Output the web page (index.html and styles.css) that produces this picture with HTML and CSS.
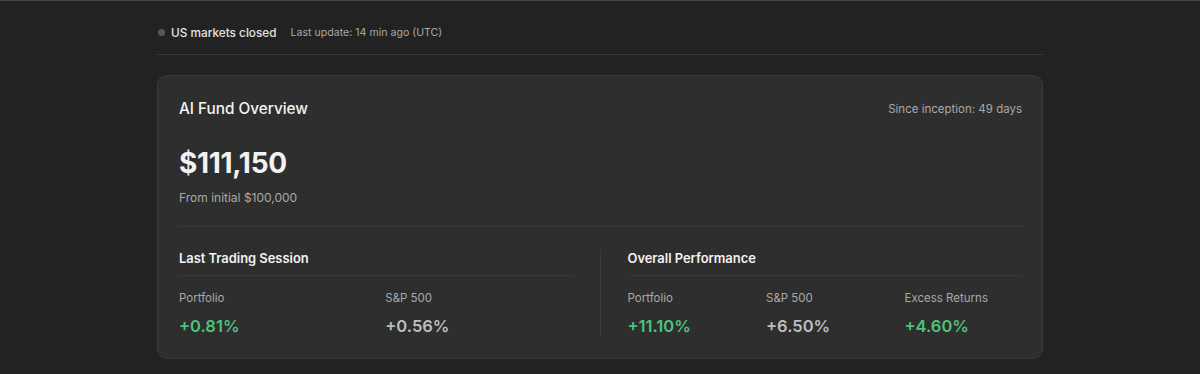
FILE: index.html
```html
<!DOCTYPE html>
<html lang="en">
<head>
    <meta charset="UTF-8">
    <meta name="viewport" content="width=device-width, initial-scale=1.0">
    <title>AI Fund Overview</title>
    <link rel="stylesheet" href="styles.css">
</head>
<body>
    <div class="container">
        <div class="market-status">
            <span class="status-dot"></span>
            <span class="status-text">US markets closed</span>
            <span class="status-update">Last update: 14 min ago (UTC)</span>
        </div>

        <div class="card">
            <div class="card-header">
                <h1>AI Fund Overview</h1>
                <span class="muted">Since inception: 49 days</span>
            </div>

            <div class="fund-value">$111,150</div>
            <div class="fund-initial">From initial $100,000</div>

            <div class="sections">
                <div class="section section-left">
                    <h2>Last Trading Session</h2>
                    <div class="stats stats-2">
                        <div class="stat">
                            <div class="stat-label">Portfolio</div>
                            <div class="stat-value up">+0.81%</div>
                        </div>
                        <div class="stat">
                            <div class="stat-label">S&amp;P 500</div>
                            <div class="stat-value">+0.56%</div>
                        </div>
                    </div>
                </div>

                <div class="section section-right">
                    <h2>Overall Performance</h2>
                    <div class="stats stats-3">
                        <div class="stat">
                            <div class="stat-label">Portfolio</div>
                            <div class="stat-value up">+11.10%</div>
                        </div>
                        <div class="stat">
                            <div class="stat-label">S&amp;P 500</div>
                            <div class="stat-value">+6.50%</div>
                        </div>
                        <div class="stat">
                            <div class="stat-label">Excess Returns</div>
                            <div class="stat-value up">+4.60%</div>
                        </div>
                    </div>
                </div>
            </div>
        </div>
    </div>
</body>
</html>
```

FILE: styles.css
```css
:root {
    --bg: #222222;
    --card: #2e2e2e;
    --border: #3b3b3b;
    --text: #f2f2f2;
    --text-secondary: #a9a9a9;
    --green: #4cc27c;
    --radius: 10px;
}

* {
    margin: 0;
    padding: 0;
    box-sizing: border-box;
}

body {
    background-color: var(--bg);
    color: var(--text);
    font-family: Inter, 'Liberation Sans', sans-serif;
    border-top: 1px solid #464646;
}

.container {
    width: 886px;
    margin: 0 auto;
}

.market-status {
    display: flex;
    align-items: center;
    height: 54px;
    padding-top: 10px;
    border-bottom: 1px solid var(--border);
}

.status-dot {
    width: 7px;
    height: 7px;
    border-radius: 50%;
    background-color: #575757;
    margin-left: 1px;
    margin-right: 6px;
}

.status-text {
    font-size: 11.8px;
    font-weight: 500;
    color: #e2e2e2;
    margin-right: 14px;
}

.status-update {
    font-size: 10.6px;
    color: var(--text-secondary);
}

.card {
    margin-top: 20px;
    background-color: var(--card);
    border: 1px solid var(--border);
    border-radius: var(--radius);
    padding: 23px 20px 21px 21px;
}

.card-header {
    display: flex;
    justify-content: space-between;
    align-items: center;
}

h1 {
    font-size: 15.3px;
    font-weight: 500;
    line-height: 20px;
}

.muted {
    font-size: 11.5px;
    color: var(--text-secondary);
}

.fund-value {
    font-size: 28px;
    font-weight: 700;
    line-height: 34px;
    margin-top: 27px;
    letter-spacing: -0.3px;
}

.fund-initial {
    font-size: 12px;
    color: var(--text-secondary);
    margin-top: 10px;
    line-height: 16px;
}

.sections {
    display: grid;
    grid-template-columns: 1fr 1fr;
    margin-top: 20px;
    padding-top: 23px;
    border-top: 1px solid var(--border);
}

.section-left {
    padding-right: 26px;
    border-right: 1px solid var(--border);
}

.section-right {
    padding-left: 27px;
}

h2 {
    font-size: 12.9px;
    font-weight: 600;
    line-height: 18px;
    padding-bottom: 7px;
    border-bottom: 1px solid #383838;
}

.stats {
    display: grid;
    margin-top: 14px;
}

.stats-2 {
    grid-template-columns: 1fr 1fr;
    column-gap: 18px;
}

.stats-3 {
    grid-template-columns: repeat(3, 1fr);
    column-gap: 21px;
}

.stat-label {
    font-size: 11.5px;
    line-height: 16px;
    color: var(--text-secondary);
}

.stat-value {
    font-size: 16.5px;
    font-weight: 600;
    line-height: 22px;
    margin-top: 9px;
    color: #bdbdbd;
}

.stat-value.up {
    color: var(--green);
}
```
